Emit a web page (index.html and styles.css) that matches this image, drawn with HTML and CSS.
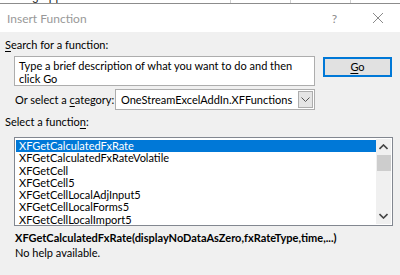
FILE: index.html
```html
<!DOCTYPE html>
<html lang="en">
  <head>
    <meta charset="UTF-8" />
    <title>Insert Function</title>
    <link rel="stylesheet" href="styles.css">
  </head>
  <body>
    <div class="sheet-strip">
      <span class="sheet-text">leaning approved 1778</span>
      <span class="sheet-cell c1"></span>
      <span class="sheet-cell c2"></span>
      <span class="sheet-cell c3"></span>
    </div>

    <div class="dialog">
      <div class="title-bar">
        <span class="title">Insert Function</span>
        <span class="title-help">?</span>
        <svg class="title-close" width="12" height="12" viewBox="0 0 12 12">
          <path d="M1 1 L11 11 M11 1 L1 11" stroke="#8a8a8a" stroke-width="1" fill="none" />
        </svg>
      </div>

      <div class="dialog-body">
        <div class="label"><u>S</u>earch for a function:</div>

        <div class="search-row">
          <div class="search-box">Type a brief description of what you want to do and then click Go</div>
          <div class="go-button"><u>G</u>o</div>
        </div>

        <div class="category-row">
          <span class="category-label">Or select a <u>c</u>ategory:</span>
          <div class="category-select">
            <span class="category-value">OneStreamExcelAddIn.XFFunctions</span>
            <span class="drop-button">
              <svg width="9" height="5" viewBox="0 0 9 5">
                <path d="M0.5 0.5 L4.5 4.5 L8.5 0.5" stroke="#555" stroke-width="1" fill="none" />
              </svg>
            </span>
          </div>
        </div>

        <div class="label list-label">Select a functio<u>n</u>:</div>

        <div class="func-list">
          <div class="func-items">
            <div class="func-item selected">XFGetCalculatedFxRate</div>
            <div class="func-item">XFGetCalculatedFxRateVolatile</div>
            <div class="func-item">XFGetCell</div>
            <div class="func-item">XFGetCell5</div>
            <div class="func-item">XFGetCellLocalAdjInput5</div>
            <div class="func-item">XFGetCellLocalForms5</div>
            <div class="func-item">XFGetCellLocalImport5</div>
          </div>
          <div class="scrollbar">
            <svg class="arrow" width="9" height="6" viewBox="0 0 9 6">
              <path d="M0.5 5 L4.5 1 L8.5 5" stroke="#444" stroke-width="1.6" fill="none" />
            </svg>
            <div class="thumb"></div>
            <div class="track"></div>
            <svg class="arrow" width="9" height="6" viewBox="0 0 9 6">
              <path d="M0.5 1 L4.5 5 L8.5 1" stroke="#444" stroke-width="1.6" fill="none" />
            </svg>
          </div>
        </div>

        <div class="signature">XFGetCalculatedFxRate(displayNoDataAsZero,fxRateType,time,...)</div>
        <div class="help-text">No help available.</div>
      </div>
    </div>
  </body>
</html>
```

FILE: styles.css
```css
body {
  margin: 0;
  width: 400px;
  height: 275px;
  overflow: hidden;
  font-family: Lato, "Noto Sans", sans-serif;
  font-size: 11px;
  color: #000;
  background-color: #f0f0f0;
}
u {
  text-decoration-thickness: 1px;
  text-underline-offset: 2px;
}
.sheet-strip {
  position: relative;
  height: 3px;
  overflow: hidden;
  background-color: #fff;
  border-bottom: 1px solid #8c8c8c;
}
.sheet-text {
  position: absolute;
  left: 0;
  top: -10px;
  font-family: "Liberation Sans", sans-serif;
  font-size: 12px;
  line-height: 12px;
  color: #222;
}
.sheet-cell {
  position: absolute;
  top: 0;
  width: 1px;
  height: 3px;
  background-color: #cfcfcf;
}
.c1 { left: 230px; }
.c2 { left: 290px; }
.c3 { left: 350px; }
.title-bar {
  display: flex;
  align-items: center;
  height: 28px;
  background-color: #fff;
  padding: 0 16px 0 7px;
}
.title {
  flex: 1;
  color: #999;
  font-size: 12px;
}
.title-help {
  color: #8a8a8a;
  font-size: 12px;
  margin-right: 35px;
}
.dialog-body {
  padding: 5px 7px 0 5px;
}
.label {
  line-height: 16px;
}
.search-row {
  display: flex;
  align-items: flex-start;
  margin-top: 3px;
  padding-left: 9px;
}
.search-box {
  width: 301px;
  height: 30px;
  padding: 3px 4px 0 4px;
  box-sizing: border-box;
  background-color: #fff;
  border: 1px solid #adadad;
  line-height: 12.5px;
}
.go-button {
  margin-left: 8px;
  margin-top: 1px;
  width: 69px;
  height: 20px;
  box-sizing: border-box;
  border: 2px solid #0078d7;
  background-color: #e1e1e1;
  text-align: center;
  line-height: 15px;
}
.category-row {
  display: flex;
  align-items: center;
  margin-top: 3px;
  padding-left: 10px;
}
.category-label {
  flex: none;
  width: 100px;
  white-space: nowrap;
}
.category-select {
  display: flex;
  align-items: center;
  width: 200px;
  height: 21px;
  box-sizing: border-box;
  border: 1px solid #adadad;
  background-color: #fff;
  padding: 1px;
}
.category-value {
  flex: 1;
  padding-left: 4px;
  white-space: nowrap;
  overflow: hidden;
}
.drop-button {
  flex: none;
  display: flex;
  align-items: center;
  justify-content: center;
  width: 15px;
  height: 17px;
  box-sizing: border-box;
  border: 1px solid #adadad;
  background-color: #e5e5e5;
}
.list-label {
  margin-top: 4px;
}
.func-list {
  display: flex;
  margin-top: 7px;
  margin-left: 9px;
  width: 379px;
  height: 89px;
  box-sizing: border-box;
  border: 1px solid #828790;
  background-color: #fff;
  padding: 1px;
}
.func-items {
  flex: 1;
  padding-top: 1px;
}
.func-item {
  height: 12.3px;
  line-height: 12.3px;
  padding-left: 3px;
}
.func-item.selected {
  background-color: #0078d7;
  color: #fff;
}
.scrollbar {
  display: flex;
  flex-direction: column;
  align-items: center;
  width: 15px;
  background-color: #f0f0f0;
}
.arrow {
  margin: 5px 0;
}
.thumb {
  width: 14px;
  height: 16px;
  background-color: #cdcdcd;
}
.track {
  flex: 1;
}
.signature {
  margin-top: 5px;
  padding-left: 10px;
  font-weight: bold;
  line-height: 14px;
}
.help-text {
  margin-top: 1px;
  padding-left: 10px;
  line-height: 14px;
}
```
